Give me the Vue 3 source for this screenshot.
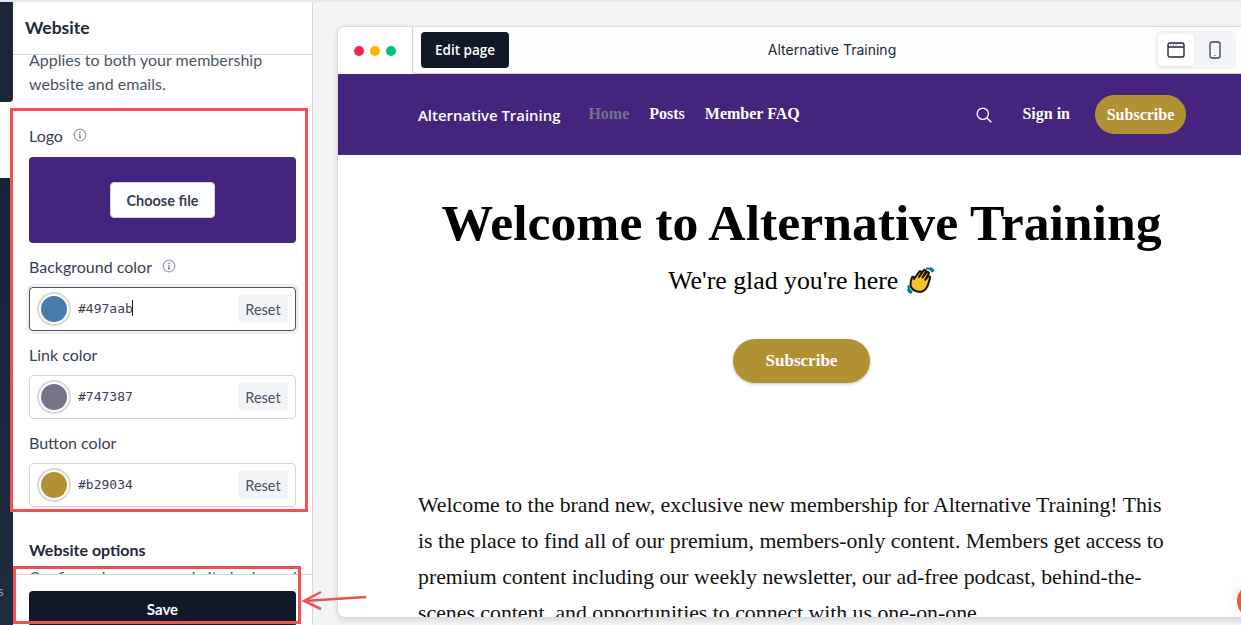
<template>
  <div class="app">
    <aside class="rail">
      <div class="rail-top"></div>
      <div class="rail-bottom"><span class="rail-text">s</span></div>
    </aside>

    <section class="panel">
      <header class="panel-head">Website</header>
      <div class="panel-body">
        <p class="desc">Applies to both your membership website and emails.</p>

        <div class="label logo-label">
          Logo
          <svg class="info" viewBox="0 0 14 14" width="14" height="14">
            <circle cx="7" cy="7" r="5.8" fill="none" stroke="#9ca3af" stroke-width="1.3" />
            <path d="M7 6.4v3.2M6.2 6.4H7M6 9.6h2" fill="none" stroke="#6b7280" stroke-width="1.1" />
            <circle cx="7" cy="4.3" r=".8" fill="#6b7280" />
          </svg>
        </div>
        <div class="upload">
          <button class="choose">Choose file</button>
        </div>

        <div v-for="field in fields" :key="field.label" class="field">
          <div class="label">
            {{ field.label }}
            <svg v-if="field.info" class="info" viewBox="0 0 14 14" width="14" height="14">
              <circle cx="7" cy="7" r="5.8" fill="none" stroke="#9ca3af" stroke-width="1.3" />
              <path d="M7 6.4v3.2M6.2 6.4H7M6 9.6h2" fill="none" stroke="#6b7280" stroke-width="1.1" />
              <circle cx="7" cy="4.3" r=".8" fill="#6b7280" />
            </svg>
          </div>
          <div class="color-input" :class="{ focused: field.focused }">
            <span class="swatch"><i :style="{ background: field.value }"></i></span>
            <span class="hex">{{ field.value }}<b v-if="field.focused" class="caret"></b></span>
            <button class="reset">Reset</button>
          </div>
        </div>

        <h4 class="options">Website options</h4>
        <p class="options-text">Configure how your website looks and works</p>
      </div>
      <footer class="panel-foot">
        <button class="save">Save</button>
      </footer>
    </section>

    <main class="stage">
      <div class="card">
        <div class="toolbar">
          <div class="dots"><i class="red"></i><i class="amber"></i><i class="green"></i></div>
          <div class="bar">
            <button class="edit">Edit page</button>
            <div class="bar-title">Alternative Training</div>
            <div class="toggle">
              <span class="toggle-btn active">
                <svg viewBox="0 0 18 16" width="18" height="16">
                  <rect x="1" y="1" width="16" height="14" rx="2" fill="#fff" stroke="#1f2937" stroke-width="1.4" />
                  <path d="M1 5h16" stroke="#1f2937" stroke-width="1.4" />
                  <path d="M3.5 3h1M6 3h1M8.500 3h1" stroke="#6b7280" stroke-width="1" />
                </svg>
              </span>
              <span class="toggle-btn">
                <svg viewBox="0 0 12 18" width="12" height="18">
                  <rect x="1" y="1" width="10" height="16" rx="2" fill="none" stroke="#374151" stroke-width="1.3" />
                  <path d="M5.300 14.500h1.400" stroke="#6b7280" stroke-width="1.200" />
                </svg>
              </span>
            </div>
          </div>
        </div>

        <nav class="site-nav">
          <span class="brand">Alternative Training</span>
          <a class="link home">Home</a>
          <a class="link">Posts</a>
          <a class="link">Member FAQ</a>
          <svg class="search" viewBox="0 0 16 16" width="16" height="16">
            <circle cx="6.800" cy="6.800" r="5.600" fill="none" stroke="#fff" stroke-width="1.400" />
            <path d="M11 11l4.300 4.300" stroke="#fff" stroke-width="1.400" />
          </svg>
          <a class="link signin">Sign in</a>
          <button class="pill small">Subscribe</button>
        </nav>

        <div class="hero">
          <h1>Welcome to Alternative Training</h1>
          <p class="sub">
            We're glad you're here
            <svg class="clap" viewBox="0 0 28 28" width="28" height="28">
              <path d="M7 12l5-7c1-1.400 3-.4 2.300 1.200L12 10l4.500-6.500c1-1.400 3-.3 2.300 1.300L15.500 10.500l4-5c1.100-1.300 2.900-.2 2.200 1.300l-3.500 6 2.500-3c1.100-1.200 2.800-.1 2.300 1.300-.8 2.600-1.600 6-2.700 8.400-2 4.500-6.600 6.500-10.800 4.700C5.500 23 3.400 20 3.500 17c0-1.400 1-5.500 1.500-6.500.6-1.300 2.500-1.100 2 1.500z" fill="#fbc02d" stroke="#111" stroke-width="2" stroke-linejoin="round" />
              <path d="M20 1.500c2-.3 4 .8 5 2.800M23.500 1.200c1.200.4 2.200 1.200 2.800 2.300" fill="none" stroke="#0e7490" stroke-width="2" stroke-linecap="round" />
              <path d="M1.500 19c0 2.300 1 4.500 3 5.800M1 23c.6 1.200 1.500 2.200 2.700 2.800" fill="none" stroke="#0e7490" stroke-width="2" stroke-linecap="round" />
            </svg>
          </p>
          <button class="pill big">Subscribe</button>
        </div>

        <p class="copy">
          Welcome to the brand new, exclusive new membership for Alternative Training! This
          is the place to find all of our premium, members-only content. Members get access to
          premium content including our weekly newsletter, our ad-free podcast, behind-the-scenes
          content, and opportunities to connect with us one-on-one.
        </p>
      </div>
    </main>

    <i class="help"></i>

    <!-- annotations drawn over the screenshot -->
    <div class="mark mark-fields"></div>
    <div class="mark mark-save"></div>
    <svg class="arrow" viewBox="0 0 70 24" width="70" height="24">
      <path d="M65 8L3 12M20 3L3 12l17 8" fill="none" stroke="#ef5350" stroke-width="2.500" />
    </svg>
  </div>
</template>

<script setup>
const fields = [
  { label: 'Background color', value: '#497aab', info: true, focused: true },
  { label: 'Link color', value: '#747387' },
  { label: 'Button color', value: '#b29034' }
]
</script>

<style>
html, body { margin: 0; overflow: hidden; }
</style>

<style scoped>
.app {
  position: relative;
  display: flex;
  width: 1241px;
  height: 625px;
  overflow: hidden;
  box-sizing: border-box;
  border-top: 2px solid #e5e7eb;
  background: #f3f4f6;
  font-family: Lato, "Liberation Sans", sans-serif;
  color: #374151;
}

/* left rail */
.rail { flex: none; width: 13px; background: #fff; display: flex; flex-direction: column; }
.rail-top { height: 100px; background: #1b2638; border-bottom-right-radius: 4px; }
.rail-bottom {
  flex: 1;
  margin-top: 76px;
  background: linear-gradient(#17233a, #1f2d40);
  border-top-right-radius: 4px;
  display: flex;
  align-items: flex-end;
}
.rail-text { font-size: 13px; color: #9ca3af; margin: 0 0 26px -2px; }

/* settings panel */
.panel {
  flex: none;
  width: 300px;
  box-sizing: border-box;
  display: flex;
  flex-direction: column;
  background: #fff;
  border-right: 1px solid #d1d5db;
  border-top-left-radius: 6px;
}
.panel-head {
  flex: none;
  height: 53px;
  box-sizing: border-box;
  padding: 14px 12px 0;
  border-bottom: 1px solid #d1d5db;
  font-size: 17.500px;
  line-height: 24px;
  font-weight: 700;
  color: #1f2937;
}
.panel-body { flex: 1; overflow: hidden; padding: 0 16px; }
.desc { margin: -7px 0 0; font-size: 16px; line-height: 24px; color: #4b5563; }
.label {
  display: flex;
  align-items: center;
  gap: 10px;
  height: 24px;
  box-sizing: border-box;
  padding-bottom: 2px;
  margin-bottom: 8px;
  font-size: 16px;
  color: #374151;
}
.logo-label { margin-top: 28px; margin-bottom: 9px; }
.upload {
  height: 86px;
  display: flex;
  align-items: center;
  justify-content: center;
  background: #44247c;
  border-radius: 4px;
}
.choose {
  width: 105px;
  height: 36px;
  padding: 0;
  border: 1px solid #d1d5db;
  border-radius: 4px;
  background: #fff;
  font: 700 14.500px Lato, "Liberation Sans", sans-serif;
  color: #374151;
}
.field { margin-top: 12px; }
.color-input {
  display: flex;
  align-items: center;
  height: 44px;
  box-sizing: border-box;
  padding: 0 7px;
  border: 1px solid #d1d5db;
  border-radius: 4px;
  background: #fff;
}
.color-input.focused { border-color: #4b5563; box-shadow: 0 0 0 3px #eceef2; }
.swatch {
  flex: none;
  width: 34px;
  height: 34px;
  box-sizing: border-box;
  padding: 2px;
  border: 2px solid #d9d9d9;
  border-radius: 50%;
}
.swatch i { display: block; width: 26px; height: 26px; border-radius: 50%; }
.hex {
  flex: 1;
  position: relative;
  margin: 0 0 2px 7px;
  font: 13px "DejaVu Sans Mono", monospace;
  color: #374151;
}
.caret {
  display: inline-block;
  width: 1px;
  height: 16px;
  margin-left: -1px;
  vertical-align: -3px;
  background: #111827;
}
.reset {
  width: 50px;
  height: 28px;
  padding: 0;
  border: 0;
  border-radius: 3px;
  background: #f3f4f6;
  font: 14.500px Lato, "Liberation Sans", sans-serif;
  color: #4b5563;
}
.options { margin: 31px 0 0; font-size: 16px; line-height: 24px; font-weight: 700; color: #1f2937; }
.options-text { margin: 3px 0 0; font-size: 16px; line-height: 24px; color: #4b5563; white-space: nowrap; }
.panel-foot {
  flex: none;
  height: 51px;
  box-sizing: border-box;
  padding: 16px 16px 0;
  border-top: 1px solid #d1d5db;
  overflow: hidden;
}
.save {
  display: block;
  width: 100%;
  height: 36px;
  border: 0;
  border-radius: 4px;
  background: #111827;
  color: #fff;
  font: 700 15px Lato, "Liberation Sans", sans-serif;
}

/* preview */
.stage { flex: 1; min-width: 0; overflow: hidden; padding: 24px 0 0 24px; }
.card {
  width: 930px;
  height: 592px;
  box-sizing: border-box;
  overflow: hidden;
  background: #fff;
  border: 1px solid #d8dbe0;
  border-radius: 8px;
  box-shadow: 0 2px 6px rgba(0, 0, 0, .12);
  font-family: "Liberation Serif", serif;
}
.toolbar { display: flex; height: 47px; font-family: Inter, "Liberation Sans", sans-serif; }
.dots {
  flex: none;
  width: 74px;
  box-sizing: border-box;
  padding-left: 16px;
  display: flex;
  align-items: center;
  gap: 6px;
  background: #fff;
}
.dots i { width: 10px; height: 10px; border-radius: 50%; }
.dots .red { background: #fb1f53; }
.dots .amber { background: #fdb600; }
.dots .green { background: #00c07c; }
.bar {
  flex: 1;
  display: flex;
  align-items: center;
  padding: 0 30px 0 8px;
  background: #fcfdfd;
  border-left: 1px solid #d1d5db;
  border-bottom: 1px solid #d1d5db;
  border-bottom-left-radius: 4px;
}
.edit {
  width: 88px;
  height: 36px;
  padding: 0;
  border: 0;
  border-radius: 4px;
  background: #111827;
  color: #fff;
  font: 600 13.500px "Open Sans", "Liberation Sans", sans-serif;
}
.bar-title { flex: 1; margin-bottom: 2px; text-align: center; font-size: 14px; color: #1f2937; }
.toggle {
  display: flex;
  gap: 3px;
  height: 38px;
  box-sizing: border-box;
  padding: 3px;
  border-radius: 6px;
  background: #f3f4f6;
}
.toggle-btn {
  width: 36px;
  display: flex;
  align-items: center;
  justify-content: center;
  border-radius: 4px;
}
.toggle-btn.active { background: #fff; box-shadow: 0 1px 2px rgba(0, 0, 0, .1); }

.site-nav {
  display: flex;
  align-items: center;
  height: 81px;
  padding: 0 80px;
  background: #44247c;
}
.brand { font: 600 14.900px "Open Sans", "Liberation Sans", sans-serif; color: #fff; margin-right: 8px; }
.link { margin-left: 20px; margin-bottom: 2px; font-size: 16px; font-weight: 700; color: #fff; }
.home { color: #747387; }
.search { margin-left: auto; }
.signin { margin-left: 30px; }
.pill {
  padding: 0;
  border: 0;
  border-radius: 22px;
  background: #b29034;
  color: #fff;
  font: 700 16px "Liberation Serif", serif;
}
.small { width: 91px; height: 39px; margin-left: 25px; }
.big { width: 137px; height: 44px; font-size: 17px; box-shadow: 0 1px 3px rgba(0, 0, 0, .25); }

.hero { text-align: center; padding: 40px 81px 0 80px; }
.hero h1 {
  margin: 0 -20px;
  font-size: 51.700px;
  line-height: 56px;
  font-weight: 700;
  white-space: nowrap;
  color: #000;
}
.sub { margin: 12px 0 40px; font-size: 25.800px; line-height: 36px; color: #000; }
.clap { vertical-align: -6px; margin-left: 2px; }
.copy { margin: 104px 0 0; padding: 0 100px 0 80px; font-size: 21.800px; line-height: 36px; color: #111; }

.help {
  position: absolute;
  left: 1237px;
  top: 582px;
  width: 34px;
  height: 34px;
  border-radius: 50%;
  background: #ee5a2b;
  box-shadow: 0 0 20px rgba(0, 0, 0, .08);
}
.mark { position: absolute; box-sizing: border-box; border: 3px solid #ef5350; pointer-events: none; }
.mark-fields { left: 10px; top: 106px; width: 298px; height: 404px; }
.mark-save { left: 13px; top: 564px; width: 288px; height: 58px; }
.arrow { position: absolute; left: 301px; top: 587px; }
</style>
